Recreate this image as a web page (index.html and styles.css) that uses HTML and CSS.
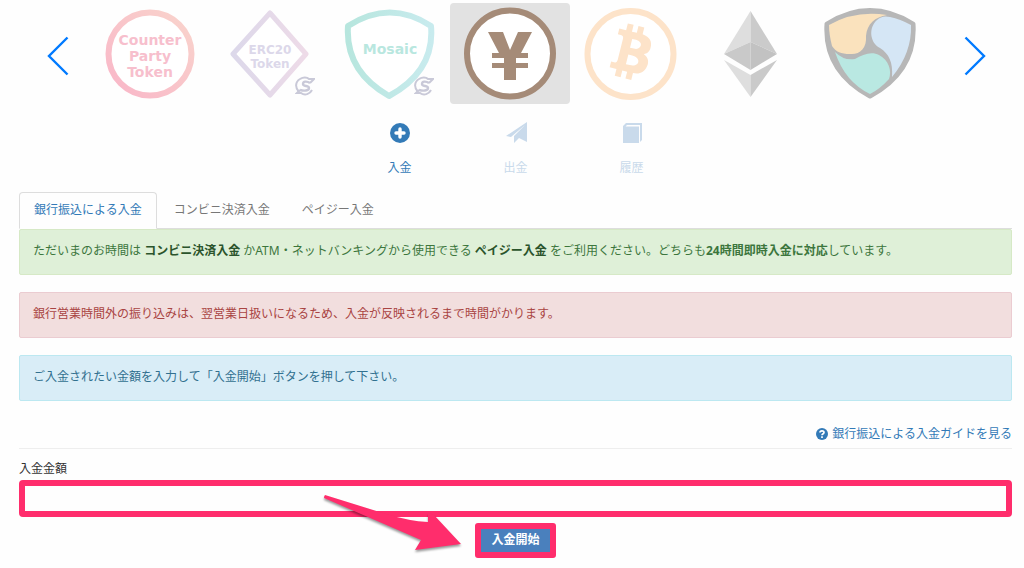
FILE: index.html
```html
<!DOCTYPE html>
<html lang="ja">
<head>
<meta charset="utf-8">
<meta name="viewport" content="width=device-width, initial-scale=1">
<title>入金</title>
<link rel="stylesheet" href="styles.css">
</head>
<body>
<svg class="defs" aria-hidden="true">
  <defs>
    <linearGradient id="g-party" x1="0" y1="1" x2="1" y2="0"><stop offset="0" stop-color="#f9b6c8"/><stop offset="1" stop-color="#f9d4cc"/></linearGradient>
    <linearGradient id="g-erc"><stop offset="0" stop-color="#dcd8ea"/><stop offset="1" stop-color="#eedbe8"/></linearGradient>
    <linearGradient id="g-mosaic"><stop offset="0" stop-color="#b7e6de"/><stop offset="1" stop-color="#c8ebee"/></linearGradient>
    <symbol id="swap" viewBox="0 0 20 20">
      <g fill="none" stroke="#c9c9d8" stroke-width="2">
        <path d="M4 16C0 12 0 6 5 3C8 1 12 1 14 3H19L15 7"/>
        <path d="M17 14C15 18 10 20 6 17H2L5 14"/>
        <path d="M15 7C12 5 8 5 8 8C8 11 14 9 14 12C14 15 9 15 5 14" stroke-width="2.400"/>
      </g>
    </symbol>
  </defs>
</svg>
<main class="page">
  <nav class="carousel" aria-label="通貨">
    <button class="arrow" type="button" aria-label="前へ"><svg width="22" height="40" viewBox="0 0 22 40"><path d="M20.500 1.500L2 20L20.500 38.500"/></svg></button>
    <div class="coins">
      <button class="coin" type="button">
        <svg width="120" height="100" viewBox="0 0 120 100">
          <circle cx="60" cy="51" r="41.500" fill="#fff" stroke="url(#g-party)" stroke-width="6"/>
          <g class="logo-text logo-party"><text x="60" y="42">Counter</text><text x="60" y="58">Party</text><text x="60" y="74">Token</text></g>
        </svg>
      </button>
      <button class="coin" type="button">
        <svg width="120" height="100" viewBox="0 0 120 100">
          <path d="M60 10L96 51L60 92L23 51Z" fill="#fff" stroke="url(#g-erc)" stroke-width="5" stroke-linejoin="round"/>
          <g class="logo-text logo-erc"><text x="60" y="51">ERC20</text><text x="60" y="65">Token</text></g>
          <use href="#swap" x="85" y="73" width="20" height="20"/>
        </svg>
      </button>
      <button class="coin" type="button">
        <svg width="120" height="100" viewBox="0 0 120 100">
          <path d="M18 23Q60 -4 101 23Q105 68 59 93Q15 68 18 23Z" fill="#fff" stroke="url(#g-mosaic)" stroke-width="6" stroke-linejoin="round"/>
          <text class="logo-text logo-mosaic" x="60" y="51">Mosaic</text>
          <use href="#swap" x="84" y="73" width="20" height="20"/>
        </svg>
      </button>
      <button class="coin coin-active" type="button" aria-label="日本円" aria-pressed="true">
        <svg width="120" height="100" viewBox="0 0 120 100">
          <circle cx="60" cy="50.500" r="43" fill="#fff" stroke="#a58b78" stroke-width="6"/>
          <path d="M38 29H53L60 47L68 29H82L71 50H78V55H66V60H78V65H66V77H54V65H42V60H54V55H42V50H49Z" fill="#a58b78"/>
        </svg>
      </button>
      <button class="coin" type="button" aria-label="ビットコイン">
        <svg width="120" height="100" viewBox="0 0 120 100">
          <circle cx="60.500" cy="51" r="43" fill="#fff" stroke="#fde3c9" stroke-width="6"/>
          <g transform="translate(61 49) rotate(14)">
            <path fill="#fde3c9" fill-rule="evenodd" d="M-17 -20H-10V-27H-4V-20H1V-27H7V-20C15 -19 18 -15 18 -9C18 -5 16 -2 13 -1C18 1 20 5 19 10C18 17 13 20 7 20V27H1V20H-4V27H-10V20H-17V14H-13Q-11 14 -11 11V-11Q-11 -14 -14 -14H-17ZM-2 -13V-4H2C10 -4 10 -13 2 -13ZM-2 3V13H2C12 13 12 3 2 3Z"/>
          </g>
        </svg>
      </button>
      <button class="coin" type="button" aria-label="イーサリアム">
        <svg width="120" height="100" viewBox="0 0 120 100">
          <path d="M60.500 8L34 51L60.500 39Z" fill="#dedede"/><path d="M60.500 8L87 51L60.500 39Z" fill="#cbcbcb"/>
          <path d="M34 51L60.500 39V67Z" fill="#c9c9c9"/><path d="M87 51L60.500 39V67Z" fill="#c2c2c2"/>
          <path d="M34 57L60.500 72V94Z" fill="#dedede"/><path d="M87 57L60.500 72V94Z" fill="#cacaca"/>
        </svg>
      </button>
      <button class="coin" type="button" aria-label="ネム">
        <svg width="120" height="100" viewBox="0 0 120 100">
          <path d="M17 21Q60 -6 103 21Q106 68 60 93Q14 68 17 21Z" fill="#b7b7b7" stroke="#b7b7b7" stroke-width="5" stroke-linejoin="round"/>
          <path d="M19 22Q45 7 77 12C65 14 57 21 56 33C57 46 49 52 40 51C31 51 26 49 22 43Q19 31 19 22Z" fill="#fae2bd"/>
          <path d="M80 14Q90 16 101 22Q102 50 82 74C83 59 79 51 70 45C60 40 58 25 67 17Q72 12 80 14Z" fill="#d5e6f5"/>
          <path d="M25 49Q34 58 45 56C53 51 62 48 69 52C79 57 82 68 79 76Q70 86 60 91Q35 79 25 49Z" fill="#b9e8e2"/>
        </svg>
      </button>
    </div>
    <button class="arrow" type="button" aria-label="次へ"><svg width="22" height="40" viewBox="0 0 22 40"><path d="M1.500 1.500L20 20L1.500 38.500"/></svg></button>
  </nav>

  <nav class="actions" aria-label="操作">
    <a class="action action-active" href="#deposit" aria-current="page">
      <svg width="22" height="22" viewBox="0 0 22 22"><circle cx="11" cy="11" r="10" fill="currentColor"/><path d="M11 7V15M7 11H15" stroke="#fff" stroke-width="3.400" stroke-linecap="round"/></svg>
      <span>入金</span>
    </a>
    <a class="action" href="#withdraw">
      <svg width="22" height="22" viewBox="0 0 22 22"><path d="M22 0V20L14 16L9 21V14L20 3L6 15L1 14Z" fill="currentColor"/></svg>
      <span>出金</span>
    </a>
    <a class="action" href="#history">
      <svg width="22" height="22" viewBox="0 0 22 22"><path d="M2 21V4L5 1H21V18L19 20V3H6L4.500 4.500H18V21Z" fill="currentColor"/></svg>
      <span>履歴</span>
    </a>
  </nav>

  <div class="tabs" role="tablist">
    <button class="tab tab-active" type="button" role="tab" aria-selected="true">銀行振込による入金</button>
    <button class="tab" type="button" role="tab" aria-selected="false">コンビニ決済入金</button>
    <button class="tab" type="button" role="tab" aria-selected="false">ペイジー入金</button>
  </div>

  <section class="notices">
    <p class="notice notice-success">ただいまのお時間は <b class="strong">コンビニ決済入金</b> かATM・ネットバンキングから使用できる <b class="strong">ペイジー入金</b> をご利用ください。どちらも<b>24時間即時入金に対応</b>しています。</p>
    <p class="notice notice-danger">銀行営業時間外の振り込みは、翌営業日扱いになるため、入金が反映されるまで時間がかります。</p>
    <p class="notice notice-info">ご入金されたい金額を入力して「入金開始」ボタンを押して下さい。</p>
  </section>

  <div class="guide">
    <a class="guide-link" href="#guide">
      <svg width="12" height="12" viewBox="0 0 12 12"><circle cx="6" cy="6" r="6" fill="currentColor"/><path d="M4 4.600C4 2.300 8 2.300 8 4.500C8 5.700 6 5.700 6 7.200M6 8.300V9.900" fill="none" stroke="#fff" stroke-width="1.700"/></svg>
      <span>銀行振込による入金ガイドを見る</span>
    </a>
  </div>

  <form class="form">
    <label class="label" for="amount">入金金額</label>
    <input class="amount" id="amount" type="text" inputmode="numeric">
    <div class="submit-wrap">
      <button class="submit" type="button">入金開始</button>
      <svg class="pointer" width="155" height="68" viewBox="320 490 155 68" aria-hidden="true"><path d="M325 495Q324 496 324 498L421 540L415 550L461 544L434 515L428 513V522Q409 521 386 514Z"/></svg>
    </div>
  </form>
</main>
</body>
</html>
```
FILE: styles.css
```css
* { box-sizing: border-box; }
body {
  margin: 0;
  background: #fefefe;
  color: #333;
  font: 12px/18px "Noto Sans", "Noto Sans CJK JP", sans-serif;
}
button, input { font: inherit; }
button { cursor: pointer; }
svg { display: block; }
.defs { position: absolute; width: 0; height: 0; }
.page { padding: 3px 12px 10px 19px; }

.carousel { display: flex; align-items: center; padding: 0 27px 0 28px; }
.arrow { flex: none; border: 0; padding: 5px 0 0; background: none; }
.arrow path { fill: none; stroke: #007aff; stroke-width: 2.4; }
.coins {
  flex: 1;
  display: grid;
  grid-template-columns: repeat(7, 1fr);
  padding: 0 34px 0 21px;
}
.coin {
  display: flex;
  justify-content: center;
  border: 0;
  border-radius: 4px;
  padding: 0 0 1px;
  background: none;
}
.coin svg { flex: none; }
.coin-active { background: #e2e2e2; }
.logo-text { font-family: "DejaVu Sans", sans-serif; font-weight: 700; text-anchor: middle; }
.logo-party { font-size: 14px; fill: #f7bfcd; }
.logo-erc { font-size: 12px; fill: #dcd8ea; }
.logo-mosaic { font-size: 14px; fill: #b9e7df; }

.actions { display: flex; justify-content: center; padding: 18px 0 15px; }
.action {
  width: 116px;
  display: flex;
  flex-direction: column;
  align-items: center;
  gap: 15px;
  color: #c9daeb;
  text-decoration: none;
}
.action-active { color: #337ab7; }

.tabs { display: flex; gap: 2px; border-bottom: 1px solid #ddd; }
.tab {
  margin-bottom: -1px;
  border: 1px solid transparent;
  border-radius: 4px 4px 0 0;
  padding: 8px 14px 9px;
  background: none;
  color: #777;
}
.tab-active { border-color: #ddd #ddd #fefefe; background: #fefefe; color: #337ab7; }

.notices { display: flex; flex-direction: column; gap: 17px; }
.notice { margin: 0; border: 1px solid; border-radius: 2px; padding: 12px 13px 14px; }
.notice-success { border-color: #d6e9c6; background: #dff0d8; color: #3c763d; }
.notice-success .strong { color: #2b542c; }
.notice-danger { border-color: #ebccd1; background: #f2dede; color: #a94442; }
.notice-info { border-color: #bce8f1; background: #d9edf7; color: #31708f; }

.guide { display: flex; justify-content: flex-end; border-bottom: 1px solid #eee; padding: 24px 0 5px; }
.guide-link { display: flex; align-items: center; gap: 4px; color: #337ab7; text-decoration: none; }

.form { display: flex; flex-direction: column; padding-top: 11px; }
.label { margin-bottom: 2px; }
.amount {
  width: 100%;
  height: 37px;
  border: 6px solid #ff2d6c;
  border-radius: 4px;
  padding: 0 8px;
  background: #fefefe;
}
.submit-wrap { position: relative; align-self: center; margin-top: 6px; }
.submit {
  display: block;
  border: 6px solid #ff2d6c;
  border-radius: 3px;
  padding: 2px 10px 3px;
  background: #4a80bd;
  color: #fff;
  font-weight: 700;
}
.pointer { position: absolute; right: 100%; bottom: 0; pointer-events: none; filter: drop-shadow(0 2px 1px rgba(0, 0, 0, 0.4)); }
.pointer path { fill: #ff2d6c; }
```
